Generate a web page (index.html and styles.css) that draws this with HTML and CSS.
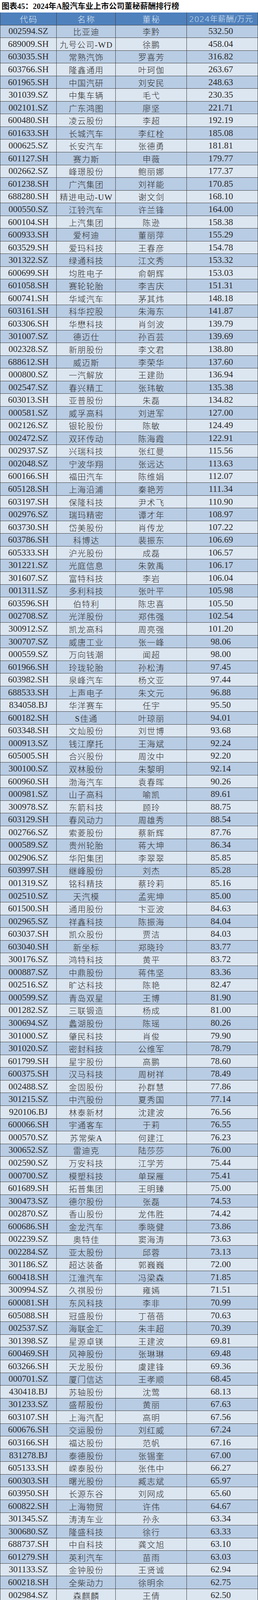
FILE: index.html
```html
<!DOCTYPE html>
<html lang="zh-CN">
<head>
<meta charset="utf-8">
<title>图表45：2024年A股汽车业上市公司董秘薪酬排行榜</title>
<link rel="stylesheet" href="styles.css">
</head>
<body>
<div class="title">图表45：2024年A股汽车业上市公司董秘薪酬排行榜</div>
<div class="tbl">
<div class="r hd"><span>代码</span><span>名称</span><span>董秘</span><span>2024年薪酬/万元</span></div>
<div class="r"><span>002594.SZ</span><span>比亚迪</span><span>李黔</span><span>532.50</span></div>
<div class="r"><span>689009.SH</span><span>九号公司-WD</span><span>徐鹏</span><span>458.04</span></div>
<div class="r"><span>603035.SH</span><span>常熟汽饰</span><span>罗喜芳</span><span>316.82</span></div>
<div class="r"><span>603766.SH</span><span>隆鑫通用</span><span>叶珂伽</span><span>263.67</span></div>
<div class="r"><span>601965.SH</span><span>中国汽研</span><span>刘安民</span><span>248.63</span></div>
<div class="r"><span>301039.SZ</span><span>中集车辆</span><span>毛弋</span><span>230.35</span></div>
<div class="r"><span>002101.SZ</span><span>广东鸿图</span><span>廖坚</span><span>221.71</span></div>
<div class="r"><span>600480.SH</span><span>凌云股份</span><span>李超</span><span>192.19</span></div>
<div class="r"><span>601633.SH</span><span>长城汽车</span><span>李红栓</span><span>185.08</span></div>
<div class="r"><span>000625.SZ</span><span>长安汽车</span><span>张德勇</span><span>181.81</span></div>
<div class="r"><span>601127.SH</span><span>赛力斯</span><span>申薇</span><span>179.77</span></div>
<div class="r"><span>002662.SZ</span><span>峰璟股份</span><span>鲍丽娜</span><span>177.37</span></div>
<div class="r"><span>601238.SH</span><span>广汽集团</span><span>刘祥能</span><span>170.85</span></div>
<div class="r"><span>688280.SH</span><span>精进电动-UW</span><span>谢文剑</span><span>168.10</span></div>
<div class="r"><span>000550.SZ</span><span>江铃汽车</span><span>许兰锋</span><span>164.00</span></div>
<div class="r"><span>600104.SH</span><span>上汽集团</span><span>陈逊</span><span>158.38</span></div>
<div class="r"><span>600933.SH</span><span>爱柯迪</span><span>董丽萍</span><span>155.29</span></div>
<div class="r"><span>603529.SH</span><span>爱玛科技</span><span>王春彦</span><span>154.78</span></div>
<div class="r"><span>301322.SZ</span><span>绿通科技</span><span>江文秀</span><span>153.32</span></div>
<div class="r"><span>600699.SH</span><span>均胜电子</span><span>俞朝辉</span><span>153.03</span></div>
<div class="r"><span>601058.SH</span><span>赛轮轮胎</span><span>李吉庆</span><span>151.31</span></div>
<div class="r"><span>600741.SH</span><span>华域汽车</span><span>茅其炜</span><span>148.18</span></div>
<div class="r"><span>603161.SH</span><span>科华控股</span><span>朱海东</span><span>141.87</span></div>
<div class="r"><span>603306.SH</span><span>华懋科技</span><span>肖剑波</span><span>139.79</span></div>
<div class="r"><span>301007.SZ</span><span>德迈仕</span><span>孙百芸</span><span>139.69</span></div>
<div class="r"><span>002328.SZ</span><span>新朋股份</span><span>李文君</span><span>138.80</span></div>
<div class="r"><span>688612.SH</span><span>威迈斯</span><span>李荣华</span><span>137.60</span></div>
<div class="r"><span>000800.SZ</span><span>一汽解放</span><span>王建勋</span><span>136.94</span></div>
<div class="r"><span>002547.SZ</span><span>春兴精工</span><span>张玮敏</span><span>135.38</span></div>
<div class="r"><span>603013.SH</span><span>亚普股份</span><span>朱磊</span><span>134.82</span></div>
<div class="r"><span>000581.SZ</span><span>威孚高科</span><span>刘进军</span><span>127.00</span></div>
<div class="r"><span>002126.SZ</span><span>银轮股份</span><span>陈敏</span><span>124.49</span></div>
<div class="r"><span>002472.SZ</span><span>双环传动</span><span>陈海霞</span><span>122.91</span></div>
<div class="r"><span>002937.SZ</span><span>兴瑞科技</span><span>张红曼</span><span>115.56</span></div>
<div class="r"><span>002048.SZ</span><span>宁波华翔</span><span>张远达</span><span>113.63</span></div>
<div class="r"><span>600166.SH</span><span>福田汽车</span><span>陈维娟</span><span>112.07</span></div>
<div class="r"><span>605128.SH</span><span>上海沿浦</span><span>秦艳芳</span><span>111.34</span></div>
<div class="r"><span>603197.SH</span><span>保隆科技</span><span>尹术飞</span><span>110.90</span></div>
<div class="r"><span>002976.SZ</span><span>瑞玛精密</span><span>谭才年</span><span>108.97</span></div>
<div class="r"><span>603730.SH</span><span>岱美股份</span><span>肖传龙</span><span>107.22</span></div>
<div class="r"><span>603786.SH</span><span>科博达</span><span>裴振东</span><span>106.69</span></div>
<div class="r"><span>605333.SH</span><span>沪光股份</span><span>成磊</span><span>106.57</span></div>
<div class="r"><span>301221.SZ</span><span>光庭信息</span><span>朱敦禹</span><span>106.17</span></div>
<div class="r"><span>301607.SZ</span><span>富特科技</span><span>李岩</span><span>106.04</span></div>
<div class="r"><span>001311.SZ</span><span>多利科技</span><span>张叶平</span><span>105.98</span></div>
<div class="r"><span>603596.SH</span><span>伯特利</span><span>陈忠喜</span><span>105.50</span></div>
<div class="r"><span>002708.SZ</span><span>光洋股份</span><span>郑伟强</span><span>102.54</span></div>
<div class="r"><span>300912.SZ</span><span>凯龙高科</span><span>周亮强</span><span>101.20</span></div>
<div class="r"><span>300707.SZ</span><span>威唐工业</span><span>张一峰</span><span>98.06</span></div>
<div class="r"><span>000559.SZ</span><span>万向钱潮</span><span>闻超</span><span>98.00</span></div>
<div class="r"><span>601966.SH</span><span>玲珑轮胎</span><span>孙松涛</span><span>97.45</span></div>
<div class="r"><span>603982.SH</span><span>泉峰汽车</span><span>杨文亚</span><span>97.44</span></div>
<div class="r"><span>688533.SH</span><span>上声电子</span><span>朱文元</span><span>96.88</span></div>
<div class="r"><span>834058.BJ</span><span>华洋赛车</span><span>任宇</span><span>95.50</span></div>
<div class="r"><span>600182.SH</span><span>S佳通</span><span>叶琼丽</span><span>94.01</span></div>
<div class="r"><span>603348.SH</span><span>文灿股份</span><span>刘世博</span><span>93.68</span></div>
<div class="r"><span>000913.SZ</span><span>钱江摩托</span><span>王海斌</span><span>92.24</span></div>
<div class="r"><span>605005.SH</span><span>合兴股份</span><span>周汝中</span><span>92.20</span></div>
<div class="r"><span>300100.SZ</span><span>双林股份</span><span>朱黎明</span><span>92.14</span></div>
<div class="r"><span>600960.SH</span><span>渤海汽车</span><span>袁春晖</span><span>90.26</span></div>
<div class="r"><span>000981.SZ</span><span>山子高科</span><span>喻凯</span><span>89.61</span></div>
<div class="r"><span>300978.SZ</span><span>东箭科技</span><span>顾玲</span><span>88.75</span></div>
<div class="r"><span>603129.SH</span><span>春风动力</span><span>周雄秀</span><span>88.54</span></div>
<div class="r"><span>002766.SZ</span><span>索菱股份</span><span>蔡新辉</span><span>87.76</span></div>
<div class="r"><span>000589.SZ</span><span>贵州轮胎</span><span>蒋大坤</span><span>86.34</span></div>
<div class="r"><span>002906.SZ</span><span>华阳集团</span><span>李翠翠</span><span>85.85</span></div>
<div class="r"><span>603997.SH</span><span>继峰股份</span><span>刘杰</span><span>85.28</span></div>
<div class="r"><span>001319.SZ</span><span>铭科精技</span><span>蔡玲莉</span><span>85.16</span></div>
<div class="r"><span>002510.SZ</span><span>天汽模</span><span>孟宪坤</span><span>85.00</span></div>
<div class="r"><span>601500.SH</span><span>通用股份</span><span>卞亚波</span><span>84.63</span></div>
<div class="r"><span>002965.SZ</span><span>祥鑫科技</span><span>陈振海</span><span>84.04</span></div>
<div class="r"><span>603037.SH</span><span>凯众股份</span><span>贾洁</span><span>84.03</span></div>
<div class="r"><span>603040.SH</span><span>新坐标</span><span>郑晓玲</span><span>83.77</span></div>
<div class="r"><span>300176.SZ</span><span>鸿特科技</span><span>黄平</span><span>83.72</span></div>
<div class="r"><span>000887.SZ</span><span>中鼎股份</span><span>蒋伟坚</span><span>83.36</span></div>
<div class="r"><span>002516.SZ</span><span>旷达科技</span><span>陈艳</span><span>82.47</span></div>
<div class="r"><span>000599.SZ</span><span>青岛双星</span><span>王博</span><span>81.90</span></div>
<div class="r"><span>001282.SZ</span><span>三联锻造</span><span>杨成</span><span>81.00</span></div>
<div class="r"><span>300694.SZ</span><span>蠡湖股份</span><span>陈瑶</span><span>80.26</span></div>
<div class="r"><span>301000.SZ</span><span>肇民科技</span><span>肖俊</span><span>79.90</span></div>
<div class="r"><span>301020.SZ</span><span>密封科技</span><span>公维军</span><span>78.79</span></div>
<div class="r"><span>601799.SH</span><span>星宇股份</span><span>高鹏</span><span>78.60</span></div>
<div class="r"><span>600375.SH</span><span>汉马科技</span><span>周树祥</span><span>78.49</span></div>
<div class="r"><span>002488.SZ</span><span>金固股份</span><span>孙群慧</span><span>77.86</span></div>
<div class="r"><span>301215.SZ</span><span>中汽股份</span><span>夏秀国</span><span>77.14</span></div>
<div class="r"><span>920106.BJ</span><span>林泰新材</span><span>沈建波</span><span>76.56</span></div>
<div class="r"><span>600066.SH</span><span>宇通客车</span><span>于莉</span><span>76.55</span></div>
<div class="r"><span>000570.SZ</span><span>苏常柴A</span><span>何建江</span><span>76.23</span></div>
<div class="r"><span>300652.SZ</span><span>雷迪克</span><span>陆莎莎</span><span>76.00</span></div>
<div class="r"><span>002590.SZ</span><span>万安科技</span><span>江学芳</span><span>75.44</span></div>
<div class="r"><span>000700.SZ</span><span>模塑科技</span><span>单琛雁</span><span>75.41</span></div>
<div class="r"><span>601689.SH</span><span>拓普集团</span><span>王明臻</span><span>75.00</span></div>
<div class="r"><span>300473.SZ</span><span>德尔股份</span><span>张磊</span><span>74.53</span></div>
<div class="r"><span>002870.SZ</span><span>香山股份</span><span>龙伟胜</span><span>74.42</span></div>
<div class="r"><span>600686.SH</span><span>金龙汽车</span><span>季晓健</span><span>73.86</span></div>
<div class="r"><span>002239.SZ</span><span>奥特佳</span><span>窦海涛</span><span>73.63</span></div>
<div class="r"><span>002284.SZ</span><span>亚太股份</span><span>邱蓉</span><span>73.13</span></div>
<div class="r"><span>301186.SZ</span><span>超达装备</span><span>郭巍巍</span><span>72.00</span></div>
<div class="r"><span>600418.SH</span><span>江淮汽车</span><span>冯梁森</span><span>71.85</span></div>
<div class="r"><span>300994.SZ</span><span>久祺股份</span><span>雍嫣</span><span>71.51</span></div>
<div class="r"><span>600081.SH</span><span>东风科技</span><span>李非</span><span>70.99</span></div>
<div class="r"><span>605088.SH</span><span>冠盛股份</span><span>丁蓓蓓</span><span>70.63</span></div>
<div class="r"><span>002537.SZ</span><span>海联金汇</span><span>朱丰超</span><span>70.39</span></div>
<div class="r"><span>301398.SZ</span><span>星源卓镁</span><span>王建波</span><span>69.81</span></div>
<div class="r"><span>600469.SH</span><span>风神股份</span><span>张琳琳</span><span>69.48</span></div>
<div class="r"><span>603266.SH</span><span>天龙股份</span><span>虞建锋</span><span>69.36</span></div>
<div class="r"><span>000701.SZ</span><span>厦门信达</span><span>王孝顺</span><span>68.45</span></div>
<div class="r"><span>430418.BJ</span><span>苏轴股份</span><span>沈莺</span><span>68.13</span></div>
<div class="r"><span>301233.SZ</span><span>盛帮股份</span><span>黄丽</span><span>67.63</span></div>
<div class="r"><span>603107.SH</span><span>上海汽配</span><span>高明</span><span>67.56</span></div>
<div class="r"><span>600676.SH</span><span>交运股份</span><span>刘红威</span><span>67.24</span></div>
<div class="r"><span>603166.SH</span><span>福达股份</span><span>范帆</span><span>67.16</span></div>
<div class="r"><span>831278.BJ</span><span>泰德股份</span><span>张锡奎</span><span>67.00</span></div>
<div class="r"><span>605133.SH</span><span>嵘泰股份</span><span>张伟中</span><span>66.27</span></div>
<div class="r"><span>600303.SH</span><span>曙光股份</span><span>臧志斌</span><span>65.97</span></div>
<div class="r"><span>603950.SH</span><span>长源东谷</span><span>刘网成</span><span>65.60</span></div>
<div class="r"><span>600822.SH</span><span>上海物贸</span><span>许伟</span><span>64.67</span></div>
<div class="r"><span>301345.SZ</span><span>涛涛车业</span><span>孙永</span><span>63.34</span></div>
<div class="r"><span>300680.SZ</span><span>隆盛科技</span><span>徐行</span><span>63.33</span></div>
<div class="r"><span>688737.SH</span><span>中自科技</span><span>龚文旭</span><span>63.10</span></div>
<div class="r"><span>601279.SH</span><span>英利汽车</span><span>苗雨</span><span>63.03</span></div>
<div class="r"><span>301133.SZ</span><span>金钟股份</span><span>王贤诚</span><span>62.94</span></div>
<div class="r"><span>600218.SH</span><span>全柴动力</span><span>徐明余</span><span>62.75</span></div>
<div class="r"><span>002984.SZ</span><span>森麒麟</span><span>王倩</span><span>62.50</span></div>
<div class="r"><span>002190.SZ</span><span>成飞集成</span><span>程雁</span><span>61.62</span></div>
<div class="r"><span>300507.SZ</span><span>苏奥传感</span><span>方太郎</span><span>60.40</span></div>
<div class="r"><span>603009.SH</span><span>北特科技</span><span>刘功友</span><span>60.04</span></div>
<div class="r"><span>002448.SZ</span><span>中原内配</span><span>李培</span><span>60.00</span></div>
<div class="r"><span>002355.SZ</span><span>兴民智通</span><span>刘磊</span><span>60.00</span></div>
<div class="r"><span>300863.SZ</span><span>卡倍亿</span><span>秦慈</span><span>59.87</span></div>
<div class="r"><span>301181.SZ</span><span>标榜股份</span><span>吴立</span><span>58.98</span></div>
<div class="r"><span>603787.SH</span><span>新日股份</span><span>王晨阳</span><span>58.73</span></div>
<div class="r"><span>301631.SZ</span><span>壹连科技</span><span>郑梦远</span><span>58.58</span></div>
<div class="r"><span>301539.SZ</span><span>宏鑫科技</span><span>王磊</span><span>58.48</span></div>
<div class="r"><span>002592.SZ</span><span>ST八菱</span><span>林永春</span><span>58.26</span></div>
<div class="r"><span>605228.SH</span><span>神通科技</span><span>吴超</span><span>57.67</span></div>
<div class="r"><span>832978.BJ</span><span>开特股份</span><span>李元志</span><span>57.54</span></div>
<div class="r"><span>301170.SZ</span><span>锡南科技</span><span>沈国林</span><span>57.43</span></div>
<div class="r"><span>002105.SZ</span><span>信隆健康</span><span>陈丽秋</span><span>57.42</span></div>
<div class="r"><span>831195.BJ</span><span>三祥科技</span><span>薛艳艳</span><span>57.41</span></div>
<div class="r"><span>603179.SH</span><span>新泉股份</span><span>高海龙</span><span>57.02</span></div>
<div class="r"><span>603158.SH</span><span>腾龙股份</span><span>蒋森萌</span><span>57.00</span></div>
<div class="r"><span>301022.SZ</span><span>海泰科</span><span>梁庭波</span><span>56.91</span></div>
<div class="r"><span>002454.SZ</span><span>松芝股份</span><span>陈睿</span><span>56.88</span></div>
<div class="r"><span>600099.SH</span><span>林海股份</span><span>李鹏鹏</span><span>56.76</span></div>
<div class="r"><span>603926.SH</span><span>铁流股份</span><span>周莺</span><span>55.95</span></div>
<div class="r"><span>000951.SZ</span><span>中国重汽</span><span>毕研勋</span><span>55.85</span></div>
<div class="r"><span>301499.SZ</span><span>维科精密</span><span>黄琪</span><span>55.78</span></div>
<div class="r"><span>301397.SZ</span><span>溯联股份</span><span>韩啸</span><span>55.75</span></div>
<div class="r"><span>600523.SH</span><span>贵航股份</span><span>何君</span><span>55.37</span></div>
<div class="r"><span>603121.SH</span><span>华培动力</span><span>王冲</span><span>55.24</span></div>
<div class="r"><span>000757.SZ</span><span>浩物股份</span><span>赵吉杰</span><span>54.99</span></div>
<div class="r"><span>000901.SZ</span><span>航天科技</span><span>李一凡</span><span>54.57</span></div>
<div class="r"><span>002703.SZ</span><span>浙江世宝</span><span>刘晓平</span><span>54.37</span></div>
<div class="r"><span>600335.SH</span><span>国机汽车</span><span>张之亮</span><span>54.34</span></div>
<div class="r"><span>600609.SH</span><span>金杯汽车</span><span>孙学龙</span><span>54.28</span></div>
<div class="r"><span>600653.SH</span><span>申华控股</span><span>孟磊</span><span>53.80</span></div>
<div class="r"><span>300969.SZ</span><span>恒帅股份</span><span>廖维明</span><span>53.49</span></div>
<div class="r"><span>605319.SH</span><span>无锡振华</span><span>匡亮</span><span>53.38</span></div>
<div class="r"><span>600148.SH</span><span>长春一东</span><span>周勇</span><span>53.22</span></div>
<div class="r"><span>002283.SZ</span><span>天润工业</span><span>刘立</span><span>53.05</span></div>
<div class="r"><span>837242.BJ</span><span>建邦科技</span><span>陈汝刚</span><span>52.34</span></div>
<div class="r"><span>600651.SH</span><span>飞乐音响</span><span>雷霓霁</span><span>52.21</span></div>
<div class="r"><span>600818.SH</span><span>中路股份</span><span>朱智</span><span>52.04</span></div>
<div class="r"><span>603949.SH</span><span>雪龙集团</span><span>竺菲菲</span><span>51.87</span></div>
<div class="r"><span>001278.SZ</span><span>一彬科技</span><span>姜泽</span><span>51.79</span></div>
<div class="r"><span>605018.SH</span><span>长华集团</span><span>章培嘉</span><span>51.46</span></div>
<div class="r"><span>605068.SH</span><span>明新旭腾</span><span>袁春怡</span><span>50.86</span></div>
<div class="r"><span>603768.SH</span><span>常青股份</span><span>宋方明</span><span>50.76</span></div>
<div class="r"><span>603201.SH</span><span>常润股份</span><span>周可舒</span><span>50.75</span></div>
<div class="r"><span>300733.SZ</span><span>西菱动力</span><span>杨浩</span><span>50.57</span></div>
<div class="r"><span>603048.SH</span><span>浙江黎明</span><span>陈冠羽</span><span>50.42</span></div>
<div class="r"><span>002715.SZ</span><span>登云股份</span><span>胡磊</span><span>50.38</span></div>
<div class="r"><span>300825.SZ</span><span>阿尔特</span><span>高晗</span><span>50.17</span></div>
<div class="r"><span>601777.SH</span><span>千里科技</span><span>印奇</span><span>50.00</span></div>
<div class="r"><span>301005.SZ</span><span>超捷股份</span><span>李红涛</span><span>49.92</span></div>
<div class="r"><span>603089.SH</span><span>正裕工业</span><span>陈灵辉</span><span>49.69</span></div>
<div class="r"><span>603767.SH</span><span>中马传动</span><span>林常春</span><span>49.35</span></div>
<div class="r"><span>603809.SH</span><span>豪能股份</span><span>侯凡</span><span>49.23</span></div>
<div class="r"><span>301613.SZ</span><span>新铝时代</span><span>周子彦</span><span>48.71</span></div>
<div class="r"><span>300926.SZ</span><span>博俊科技</span><span>周后高</span><span>48.54</span></div>
<div class="r"><span>300446.SZ</span><span>航天智造</span><span>徐万彬</span><span>48.21</span></div>
<div class="r"><span>300745.SZ</span><span>欣锐科技</span><span>朱若愚</span><span>48.14</span></div>
<div class="r"><span>600006.SH</span><span>东风股份</span><span>周方平</span><span>48.09</span></div>
<div class="r"><span>600178.SH</span><span>东安动力</span><span>王江华</span><span>48.03</span></div>
<div class="r"><span>603109.SH</span><span>神驰机电</span><span>杜春辉</span><span>48.00</span></div>
<div class="r"><span>600841.SH</span><span>动力新科</span><span>汪宏彬</span><span>47.80</span></div>
<div class="r"><span>002265.SZ</span><span>建设工业</span><span>蒋伟</span><span>47.50</span></div>
<div class="r"><span>000816.SZ</span><span>智慧农业</span><span>孙晋</span><span>47.47</span></div>
<div class="r"><span>300643.SZ</span><span>万通智控</span><span>李滨</span><span>46.90</span></div>
<div class="r"><span>002664.SZ</span><span>信质集团</span><span>陈世海</span><span>46.80</span></div>
<div class="r"><span>838837.BJ</span><span>华原股份</span><span>黎锦海</span><span>46.80</span></div>
<div class="r"><span>600626.SH</span><span>申达股份</span><span>骆琼琳</span><span>46.54</span></div>
<div class="r"><span>601163.SH</span><span>三角轮胎</span><span>钟丹芳</span><span>46.39</span></div>
<div class="r"><span>301310.SZ</span><span>鑫宏业</span><span>丁浩</span><span>46.21</span></div>
<div class="r"><span>002553.SZ</span><span>南方精工</span><span>王芳</span><span>46.14</span></div>
<div class="r"><span>603190.SH</span><span>亚通精工</span><span>任典进</span><span>46.12</span></div>
<div class="r"><span>300928.SZ</span><span>华安鑫创</span><span>易珊</span><span>45.64</span></div>
<div class="r"><span>603701.SH</span><span>德宏股份</span><span>朱国强</span><span>45.53</span></div>
<div class="r"><span>002725.SZ</span><span>跃岭股份</span><span>陈圳均</span><span>45.12</span></div>
<div class="r"><span>603178.SH</span><span>圣龙股份</span><span>张勇</span><span>45.02</span></div>
<div class="r"><span>300893.SZ</span><span>松原安全</span><span>叶醒</span><span>44.44</span></div>
<div class="r"><span>300585.SZ</span><span>奥联电子</span><span>王均恒</span><span>44.39</span></div>
<div class="r"><span>603758.SH</span><span>秦安股份</span><span>许锐</span><span>44.18</span></div>
<div class="r"><span>301552.SZ</span><span>科力装备</span><span>张静</span><span>43.53</span></div>
<div class="r"><span>002085.SZ</span><span>万丰奥威</span><span>李亚</span><span>43.17</span></div>
<div class="r"><span>301529.SZ</span><span>福赛科技</span><span>潘玉惠</span><span>42.86</span></div>
<div class="r"><span>603776.SH</span><span>永安行</span><span>孙继胜</span><span>42.71</span></div>
<div class="r"><span>300258.SZ</span><span>精锻科技</span><span>董义</span><span>42.54</span></div>
<div class="r"><span>002813.SZ</span><span>路畅科技</span><span>李柳</span><span>42.51</span></div>
<div class="r"><span>300611.SZ</span><span>美力科技</span><span>梁钰琪</span><span>42.00</span></div>
<div class="r"><span>001260.SZ</span><span>坤泰股份</span><span>王翔宇</span><span>41.77</span></div>
<div class="r"><span>301225.SZ</span><span>恒勃股份</span><span>阮江平</span><span>40.35</span></div>
<div class="r"><span>300580.SZ</span><span>贝斯特</span><span>陈斌</span><span>40.31</span></div>
<div class="r"><span>600386.SH</span><span>北巴传媒</span><span>王婕</span><span>40.24</span></div>
<div class="r"><span>002921.SZ</span><span>联诚精密</span><span>宋志强</span><span>39.74</span></div>
<div class="r"><span>831906.BJ</span><span>舜宇精工</span><span>董云</span><span>39.68</span></div>
<div class="r"><span>603586.SH</span><span>金麒麟</span><span>张金金</span><span>39.45</span></div>
<div class="r"><span>833533.BJ</span><span>骏创科技</span><span>唐满红</span><span>38.91</span></div>
<div class="r"><span>300816.SZ</span><span>艾可蓝</span><span>姜任健</span><span>38.70</span></div>
<div class="r"><span>836270.BJ</span><span>天铭科技</span><span>陈秋梅</span><span>38.64</span></div>
<div class="r"><span>301192.SZ</span><span>泰祥股份</span><span>姜雪</span><span>38.60</span></div>
<div class="r"><span>603788.SH</span><span>宁波高发</span><span>彭丽娜</span><span>38.21</span></div>
<div class="r"><span>300304.SZ</span><span>云意电气</span><span>梁超</span><span>37.97</span></div>
<div class="r"><span>300695.SZ</span><span>兆丰股份</span><span>付海兵</span><span>37.82</span></div>
<div class="r"><span>002536.SZ</span><span>飞龙股份</span><span>谢国楼</span><span>37.73</span></div>
<div class="r"><span>000880.SZ</span><span>潍柴重机</span><span>温涛</span><span>37.62</span></div>
<div class="r"><span>837663.BJ</span><span>明阳科技</span><span>郭成文</span><span>37.02</span></div>
<div class="r"><span>002434.SZ</span><span>万里扬</span><span>张雷刚</span><span>36.99</span></div>
<div class="r"><span>600679.SH</span><span>上海凤凰</span><span>朱鹏程</span><span>36.27</span></div>
<div class="r"><span>838030.BJ</span><span>德众汽车</span><span>易李播</span><span>36.17</span></div>
<div class="r"><span>003033.SZ</span><span>征和工业</span><span>张妮娜</span><span>35.70</span></div>
<div class="r"><span>603922.SH</span><span>金鸿顺</span><span>邹一飞</span><span>35.05</span></div>
<div class="r"><span>603211.SH</span><span>晋拓股份</span><span>邱兴忠</span><span>34.03</span></div>
<div class="r"><span>873690.BJ</span><span>捷众科技</span><span>郭一申</span><span>33.90</span></div>
<div class="r"><span>002406.SZ</span><span>远东传动</span><span>刘硕</span><span>33.65</span></div>
<div class="r"><span>300237.SZ</span><span>美晨科技</span><span>李炜刚</span><span>33.57</span></div>
<div class="r"><span>301488.SZ</span><span>豪恩汽电</span><span>李小娟</span><span>32.86</span></div>
</div>
</body>
</html>
```

FILE: styles.css
```css
html, body {
  margin: 0;
  padding: 0;
  background: #ffffff;
}

.title {
  height: 32px;
  box-sizing: border-box;
  padding-left: 4px;
  font-family: "Liberation Serif", "Noto Sans CJK SC", serif;
  font-weight: 700;
  font-size: 20px;
  line-height: 32px;
  color: #111111;
  white-space: nowrap;
}

.tbl {
  width: 660px;
}

.r {
  display: grid;
  grid-template-columns: 144px 151px 182px 1fr;
  height: 32.556px;
  box-sizing: border-box;
  border-bottom: 1px solid #3f3f3f;
  border-left: 1px solid #3f3f3f;
  border-right: 1px solid #3f3f3f;
  color: #2a2a2a;
}

.r:nth-child(even) {
  background: #b8cce4;
}

.r:nth-child(odd) {
  background: #dce6f1;
}

.r span {
  display: flex;
  align-items: center;
  justify-content: center;
  white-space: nowrap;
  border-right: 1px solid #3f3f3f;
  font-family: "Liberation Serif", "Noto Sans CJK SC", serif;
  font-size: 23px;
  overflow: hidden;
}

.r span:last-child {
  border-right: none;
  padding-right: 8px;
}

.r span:nth-child(2),
.r span:nth-child(3) {
  font-size: 21px;
  font-weight: 300;
  letter-spacing: 1.4px;
  padding-left: 1.4px;
}

.r.hd {
  background: #4f81bd;
  color: #dfe8f3;
}

.r.hd span {
  font-size: 21px;
  font-weight: 300;
  letter-spacing: 2px;
  padding-left: 2px;
}

.r.hd span:last-child {
  letter-spacing: 0.6px;
  font-family: "DejaVu Sans", "Noto Sans CJK SC", sans-serif;
  font-size: 20px;
}
```
